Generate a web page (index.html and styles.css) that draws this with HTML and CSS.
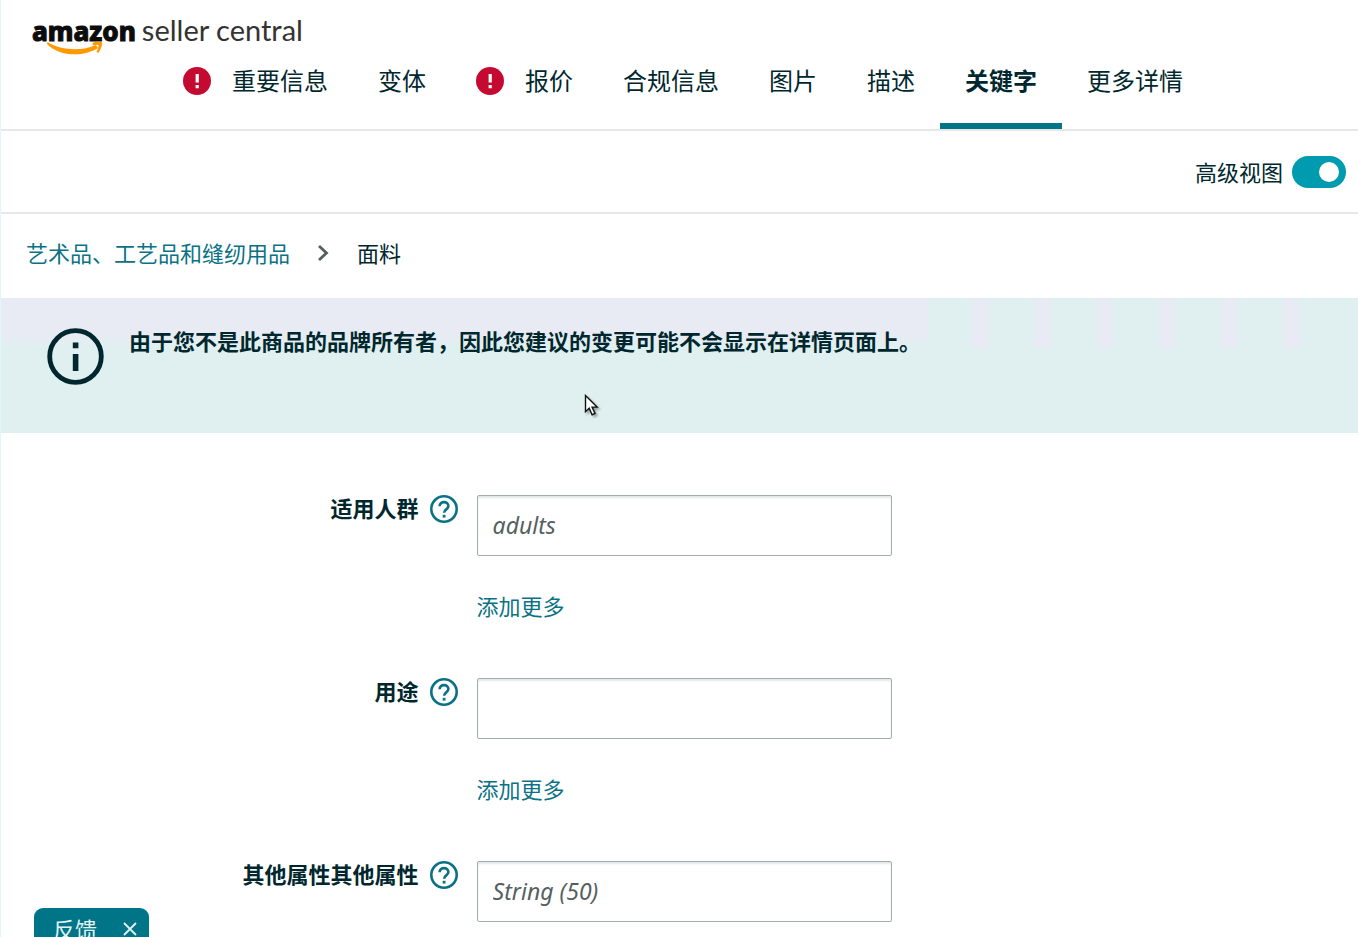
FILE: index.html
```html
<!DOCTYPE html>
<html lang="zh-CN">
<head>
<meta charset="utf-8">
<meta name="viewport" content="width=device-width, initial-scale=1">
<title>Amazon Seller Central</title>
<link rel="stylesheet" href="styles.css">
</head>
<body>
<svg class="sprite" aria-hidden="true">
  <symbol id="alert" viewBox="0 0 28 28">
    <circle cx="14" cy="14" r="14" fill="#c40a30"/>
    <path d="M12.6 7h3.2v8.6h-3.2zM12.6 18h3.2v3.2h-3.2z" fill="#fff"/>
  </symbol>
  <symbol id="help" viewBox="0 0 28 28">
    <circle cx="14" cy="14" r="12.7" fill="none" stroke="#0b7285" stroke-width="2.6"/>
    <path d="M9.6 11.3c0-2.600 1.900-4.200 4.400-4.200s4.400 1.600 4.400 4c0 3.300-4.300 3.300-4.300 6.700" fill="none" stroke="#0b7285" stroke-width="2.600"/>
    <path d="M12.700 19.800h2.800v2.800h-2.800z" fill="#0b7285"/>
  </symbol>
</svg>

<header class="header">
  <a class="logo" href="#"><span class="logo-brand">amazon</span><span class="logo-product">seller central</span>
    <svg class="logo-smile" viewBox="0 0 56 14" aria-hidden="true">
      <path d="M.5 1C14 9.500 35 10.500 49 4l2 3C36 16.500 12 15.500 0 3z" fill="#f90"/>
      <path d="M45.500 2C49 .4 53 0 54.800 1.200C55.800 3 54 8.200 51.200 12L49.500 11C51.200 7 52 4.900 51.500 4.200C50.800 3.500 48.500 3.800 45.800 4.200z" fill="#f90"/>
    </svg>
  </a>
  <nav class="tabs">
    <a class="tab" href="#"><svg class="tab-icon"><use href="#alert"/></svg>重要信息</a>
    <a class="tab" href="#">变体</a>
    <a class="tab" href="#"><svg class="tab-icon"><use href="#alert"/></svg>报价</a>
    <a class="tab" href="#">合规信息</a>
    <a class="tab" href="#">图片</a>
    <a class="tab" href="#">描述</a>
    <a class="tab tab-active" href="#" aria-current="page">关键字</a>
    <a class="tab" href="#">更多详情</a>
  </nav>
</header>

<div class="toolbar">
  <label for="advanced">高级视图</label>
  <input class="switch" type="checkbox" role="switch" id="advanced" checked>
</div>

<nav class="breadcrumb">
  <a class="link" href="#">艺术品、工艺品和缝纫用品</a>
  <svg class="chevron" viewBox="0 0 13 18" aria-hidden="true"><path d="M2 2l7.500 7L2 16" fill="none" stroke="#555f61" stroke-width="2.800"/></svg>
  <span>面料</span>
</nav>

<section class="banner">
  <svg class="banner-icon" viewBox="0 0 57 57" aria-hidden="true">
    <circle cx="28.500" cy="28.500" r="25.800" fill="none" stroke="#00272e" stroke-width="4.800"/>
    <path d="M25.800 14.500h5.600v5.800h-5.600zM25.800 26h5.600v17h-5.600z" fill="#00272e"/>
  </svg>
  <p class="banner-text">由于您不是此商品的品牌所有者，因此您建议的变更可能不会显示在详情页面上。</p>
  <svg class="pointer" viewBox="0 0 16 24" aria-hidden="true"><path d="M1.500 1.500v16.200l3.700-3.500 2.900 6.500 2.900-1.300-2.900-6.300h5z" fill="#fff" stroke="#111" stroke-width="1.400"/></svg>
</section>

<form class="form">
  <div class="row">
    <div class="label"><label for="audience">适用人群</label><button class="help" type="button" aria-label="帮助"><svg><use href="#help"/></svg></button></div>
    <div class="field"><input class="input" id="audience" type="text" placeholder="adults"><a class="link" href="#">添加更多</a></div>
  </div>
  <div class="row">
    <div class="label"><label for="usage">用途</label><button class="help" type="button" aria-label="帮助"><svg><use href="#help"/></svg></button></div>
    <div class="field"><input class="input" id="usage" type="text"><a class="link" href="#">添加更多</a></div>
  </div>
  <div class="row">
    <div class="label"><label for="other">其他属性其他属性</label><button class="help" type="button" aria-label="帮助"><svg><use href="#help"/></svg></button></div>
    <div class="field"><input class="input" id="other" type="text" placeholder="String (50)"></div>
  </div>
</form>

<aside class="feedback">
  <button class="feedback-open" type="button">反馈</button>
  <button class="feedback-close" type="button" aria-label="关闭"><svg viewBox="0 0 14 14"><path d="M1 1l12 12M13 1L1 13" stroke="#e4f4f6" stroke-width="1.800"/></svg></button>
</aside>
</body>
</html>
```
FILE: styles.css
```css
* {
  box-sizing: border-box;
}

body {
  margin: 0;
  min-height: 100vh;
  border-left: 1px solid #dcf8fc;
  background: #fff;
  color: #00272e;
  font: 22px/26px "Noto Sans", "Noto Sans CJK SC", sans-serif;
}

a {
  color: inherit;
  text-decoration: none;
}

button {
  padding: 0;
  border: 0;
  background: none;
  color: inherit;
  font: inherit;
  cursor: pointer;
}

svg {
  display: block;
}

.sprite {
  position: absolute;
  width: 0;
  height: 0;
}

.link {
  color: #0b7285;
}

/* Header */
.header {
  border-bottom: 2px solid #e7e7e7;
}

.logo {
  position: relative;
  display: flex;
  align-items: baseline;
  gap: 6px;
  width: max-content;
  padding: 14px 0 7px 31px;
  font-size: 26px;
  line-height: 32px;
}

.logo-brand {
  color: #0c0c0c;
  font-weight: 800;
  -webkit-text-stroke: 1px #0c0c0c;
}

.logo-product {
  color: #333;
  font-family: Lato, sans-serif;
  font-size: 29px;
}

.logo-smile {
  position: absolute;
  left: 46px;
  top: 41px;
  width: 56px;
  height: 14px;
}

.tabs {
  display: flex;
  padding-left: 157px;
  font-size: 24px;
}

.tab {
  display: flex;
  align-items: center;
  padding: 13px 25px 28px;
  border-bottom: 6px solid transparent;
  white-space: nowrap;
}

.tab-active {
  border-color: #007587;
  font-weight: 700;
}

.tab-icon {
  width: 28px;
  height: 28px;
  margin-right: 21px;
}

/* Advanced view toggle */
.toolbar {
  display: flex;
  align-items: center;
  justify-content: flex-end;
  gap: 9px;
  padding: 25px 12px 24px;
  border-bottom: 2px solid #e7e7e7;
}

.switch {
  appearance: none;
  display: flex;
  align-items: center;
  justify-content: flex-end;
  width: 54px;
  height: 32px;
  margin: 0;
  padding: 0 7px;
  border-radius: 16px;
  background: #009bae;
}

.switch::before {
  content: "";
  width: 20px;
  height: 20px;
  border-radius: 50%;
  background: #fff;
}

.switch:not(:checked) {
  justify-content: flex-start;
  background: #888;
}

.breadcrumb {
  display: flex;
  align-items: center;
  gap: 27px;
  padding: 26px 25px 32px;
}

.chevron {
  width: 13px;
  height: 18px;
}

/* Notice */
.banner {
  position: relative;
  display: flex;
  gap: 25px;
  padding: 30px 46px 48px;
  background:
    linear-gradient(#e8ebf3, #e8ebf3 36px, #e0f0f0) 0 0 / 927px 50px no-repeat,
    repeating-linear-gradient(90deg, #e0f0f0 0 45px, #e8ebf3 45px 61px, #e0f0f0 61px 62px) 927px 0 / 372px 50px no-repeat,
    #e0f0f0;
}

.banner-icon {
  flex: none;
  width: 57px;
  height: 57px;
}

.banner-text {
  margin: 0;
  font-weight: 700;
}

.pointer {
  position: absolute;
  left: 583px;
  top: 96px;
  width: 16px;
  height: 24px;
  filter: drop-shadow(2px 2px 1px #0005);
}

/* Attributes */
.form {
  display: grid;
  gap: 59px;
  padding: 62px 0 12px 1px;
}

.row {
  display: grid;
  grid-template-columns: 35% 1fr;
  align-items: start;
}

.label {
  display: flex;
  justify-content: flex-end;
  gap: 11px;
  padding-right: 19px;
  font-weight: 700;
}

.help svg {
  width: 28px;
  height: 28px;
}

.field {
  display: flex;
  flex-direction: column;
  align-items: flex-start;
  gap: 37px;
  padding-right: 25px;
}

.input {
  width: 100%;
  max-width: 415px;
  height: 61px;
  padding: 0 15px 2px;
  border: 1px solid #a3adad;
  border-radius: 2px;
  background: #fff;
  box-shadow: inset 0 2px 2px #e3e8e8;
  color: inherit;
  font: inherit;
  font-size: 23px;
}

.input::placeholder {
  color: #555f61;
  font-style: italic;
  opacity: 1;
}

/* Feedback tab, partly below the window edge */
.feedback {
  position: fixed;
  left: 34px;
  bottom: -13px;
  display: flex;
  align-items: center;
  gap: 26px;
  height: 42px;
  padding: 0 12px 0 19px;
  border-radius: 9px;
  background: #007587;
  color: #e4f4f6;
}

.feedback-close svg {
  width: 14px;
  height: 14px;
}
```
